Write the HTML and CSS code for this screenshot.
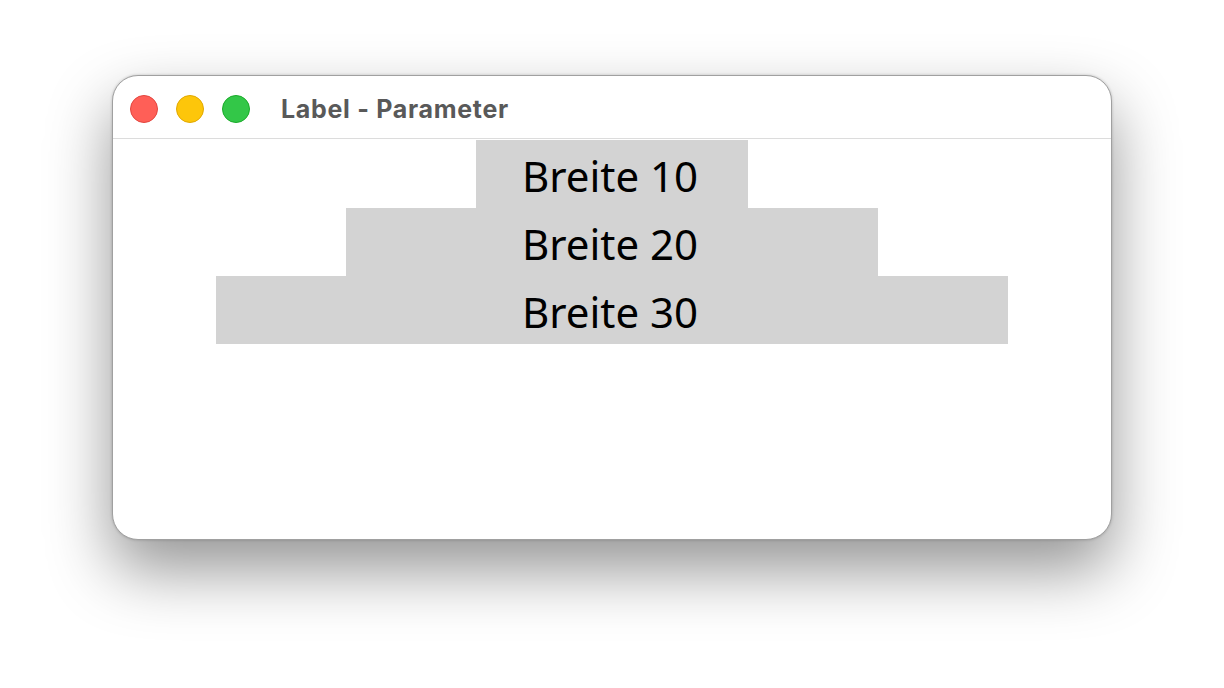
FILE: index.html
```html
<!DOCTYPE html>
<html lang="de">

<head>
    <meta charset="UTF-8">
    <title>Label - Parameter</title>
    <link rel="stylesheet" href="styles.css">
</head>

<body>
    <div class="window">
        <div class="titlebar">
            <div class="lights">
                <span class="light red"></span>
                <span class="light yellow"></span>
                <span class="light green"></span>
            </div>
            <div class="title">Label - Parameter</div>
        </div>
        <div class="content">
            <div class="label w10">Breite 10</div>
            <div class="label w20">Breite 20</div>
            <div class="label w30">Breite 30</div>
        </div>
    </div>
</body>

</html>
```
FILE: styles.css
```css
html {
    background: #fff;
}

body {
    box-sizing: border-box;
    min-height: 688px;
    margin: 0;
    padding: 75px 0 0 112px;
    font-family: "Noto Sans", "Open Sans", sans-serif;
}

.window {
    box-sizing: border-box;
    width: 1000px;
    height: 465px;
    background: #fff;
    border: 1px solid #a0a0a0;
    border-radius: 26px;
    box-shadow: 0 30px 64px rgba(0, 0, 0, 0.42), 0 0 3px rgba(0, 0, 0, 0.2);
    overflow: hidden;
}

.titlebar {
    height: 62px;
    border-bottom: 1px solid #dcdcdc;
    display: flex;
    align-items: center;
    padding-left: 17px;
}

.lights {
    display: flex;
    gap: 18px;
    margin-top: 3px;
}

.light {
    width: 26px;
    height: 26px;
    border-radius: 50%;
    border: 1px solid;
}

.red {
    background: #ff5f57;
    border-color: #e2463f;
}

.yellow {
    background: #fdc60a;
    border-color: #e1a800;
}

.green {
    background: #33c748;
    border-color: #1aab29;
}

.title {
    margin-left: 31px;
    margin-top: 3px;
    font-family: Inter, "Liberation Sans", sans-serif;
    font-weight: bold;
    font-size: 25px;
    letter-spacing: 0.7px;
    color: #595959;
}

.content {
    padding-top: 1px;
    display: flex;
    flex-direction: column;
    align-items: center;
}

.label {
    height: 68px;
    background: #d3d3d3;
    display: flex;
    align-items: center;
    justify-content: center;
    padding: 3px 4px 0 0;
    box-sizing: border-box;
    font-size: 42px;
    color: #000;
}

.w10 {
    width: 272px;
}

.w20 {
    width: 532px;
}

.w30 {
    width: 792px;
}
```
